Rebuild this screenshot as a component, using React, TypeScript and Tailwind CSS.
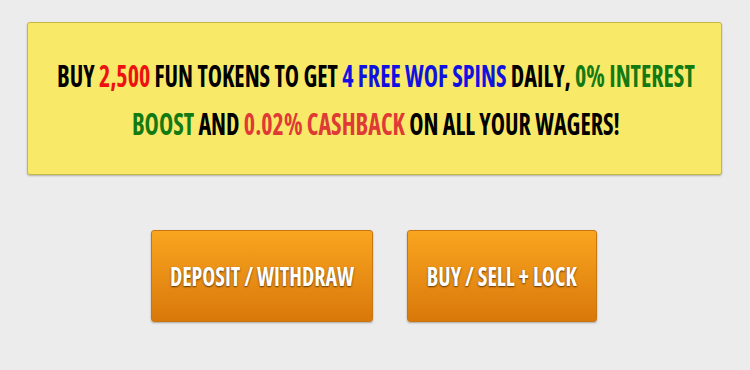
import React from "react";

export default function App() {
  const font = { fontFamily: '"Open Sans", "Liberation Sans", sans-serif' };
  return (
    <div className="w-[750px] h-[370px] bg-[#ececec] flex flex-col pt-[22px]" style={font}>
      <div className="ml-[27px] w-[695px] h-[153px] bg-[#f8ea68] border border-[#c4b74a] rounded-[3px] shadow-[0_1px_2px_rgba(0,0,0,0.25)] flex items-center justify-center">
        <p className="whitespace-nowrap text-center font-bold font-stretch-[75%] text-[30px] leading-[48px] text-black pt-[3px] pl-[3px] scale-x-[0.803]">
          BUY <span className="text-[#ee1111]">2,500</span> FUN TOKENS TO GET{" "}
          <span className="text-[#1111e0]">4 FREE WOF SPINS</span> DAILY,{" "}
          <span className="text-[#137a13]">0% INTEREST</span>
          <br />
          <span className="text-[#137a13]">BOOST</span> AND{" "}
          <span className="text-[#e03a36]">0.02% CASHBACK</span> ON ALL YOUR WAGERS!
        </p>
      </div>
      <div className="flex gap-[34px] mt-[55px] pl-[151px]">
        <button className="w-[222px] h-[92px] rounded-[3px] border border-[#c97510] bg-gradient-to-b from-[#f9a51f] to-[#d9780a] shadow-[0_1px_2px_rgba(0,0,0,0.3)] flex items-center justify-center text-white">
          <span className="whitespace-nowrap font-bold font-stretch-[75%] text-[26px] scale-x-[0.845] [text-shadow:0_1px_2px_rgba(60,30,0,0.8)]">DEPOSIT / WITHDRAW</span>
        </button>
        <button className="w-[190px] h-[92px] rounded-[3px] border border-[#c97510] bg-gradient-to-b from-[#f9a51f] to-[#d9780a] shadow-[0_1px_2px_rgba(0,0,0,0.3)] flex items-center justify-center text-white">
          <span className="whitespace-nowrap font-bold font-stretch-[75%] text-[26px] scale-x-[0.845] [text-shadow:0_1px_2px_rgba(60,30,0,0.8)]">BUY / SELL + LOCK</span>
        </button>
      </div>
    </div>
  );
}
